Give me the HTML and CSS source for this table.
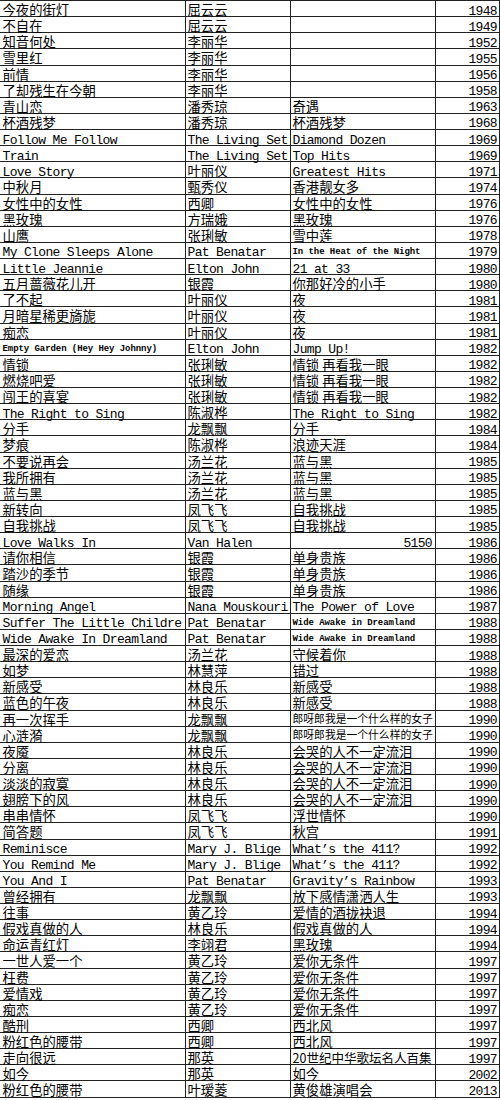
FILE: index.html
```html
<!DOCTYPE html>
<html lang="zh-CN">
<head>
<meta charset="utf-8">
<title>歌曲列表</title>
<link rel="stylesheet" href="styles.css">
</head>
<body>
<div class="sheet">
<div class="row"><span>今夜的街灯</span><span>屈云云</span><span></span><span class="en yr">1948</span></div>
<div class="row"><span>不自在</span><span>屈云云</span><span></span><span class="en yr">1949</span></div>
<div class="row"><span>知音何处</span><span>李丽华</span><span></span><span class="en yr">1952</span></div>
<div class="row"><span>雪里红</span><span>李丽华</span><span></span><span class="en yr">1955</span></div>
<div class="row"><span>前情</span><span>李丽华</span><span></span><span class="en yr">1956</span></div>
<div class="row"><span>了却残生在今朝</span><span>李丽华</span><span></span><span class="en yr">1958</span></div>
<div class="row"><span>青山恋</span><span>潘秀琼</span><span>奇遇</span><span class="en yr">1963</span></div>
<div class="row"><span>杯酒残梦</span><span>潘秀琼</span><span>杯酒残梦</span><span class="en yr">1968</span></div>
<div class="row"><span class="en">Follow Me Follow</span><span class="en">The Living Set</span><span class="en">Diamond Dozen</span><span class="en yr">1969</span></div>
<div class="row"><span class="en">Train</span><span class="en">The Living Set</span><span class="en">Top Hits</span><span class="en yr">1969</span></div>
<div class="row"><span class="en">Love Story</span><span>叶丽仪</span><span class="en">Greatest Hits</span><span class="en yr">1971</span></div>
<div class="row"><span>中秋月</span><span>甄秀仪</span><span>香港靓女多</span><span class="en yr">1974</span></div>
<div class="row"><span>女性中的女性</span><span>西卿</span><span>女性中的女性</span><span class="en yr">1976</span></div>
<div class="row"><span>黑玫瑰</span><span>方瑞娥</span><span>黑玫瑰</span><span class="en yr">1976</span></div>
<div class="row"><span>山鹰</span><span>张琍敏</span><span>雪中莲</span><span class="en yr">1978</span></div>
<div class="row"><span class="en">My Clone Sleeps Alone</span><span class="en">Pat Benatar</span><span class="sm">In the Heat of the Night</span><span class="en yr">1979</span></div>
<div class="row"><span class="en">Little Jeannie</span><span class="en">Elton John</span><span class="en">21 at 33</span><span class="en yr">1980</span></div>
<div class="row"><span>五月蔷薇花儿开</span><span>银霞</span><span>你那好冷的小手</span><span class="en yr">1980</span></div>
<div class="row"><span>了不起</span><span>叶丽仪</span><span>夜</span><span class="en yr">1981</span></div>
<div class="row"><span>月暗星稀更旖旎</span><span>叶丽仪</span><span>夜</span><span class="en yr">1981</span></div>
<div class="row"><span>痴恋</span><span>叶丽仪</span><span>夜</span><span class="en yr">1981</span></div>
<div class="row"><span class="sm">Empty Garden (Hey Hey Johnny)</span><span class="en">Elton John</span><span class="en">Jump Up!</span><span class="en yr">1982</span></div>
<div class="row"><span>情锁</span><span>张琍敏</span><span>情锁 再看我一眼</span><span class="en yr">1982</span></div>
<div class="row"><span>燃烧吧爱</span><span>张琍敏</span><span>情锁 再看我一眼</span><span class="en yr">1982</span></div>
<div class="row"><span>闯王的喜宴</span><span>张琍敏</span><span>情锁 再看我一眼</span><span class="en yr">1982</span></div>
<div class="row"><span class="en">The Right to Sing</span><span>陈淑桦</span><span class="en">The Right to Sing</span><span class="en yr">1982</span></div>
<div class="row"><span>分手</span><span>龙飘飘</span><span>分手</span><span class="en yr">1984</span></div>
<div class="row"><span>梦痕</span><span>陈淑桦</span><span>浪迹天涯</span><span class="en yr">1984</span></div>
<div class="row"><span>不要说再会</span><span>汤兰花</span><span>蓝与黑</span><span class="en yr">1985</span></div>
<div class="row"><span>我所拥有</span><span>汤兰花</span><span>蓝与黑</span><span class="en yr">1985</span></div>
<div class="row"><span>蓝与黑</span><span>汤兰花</span><span>蓝与黑</span><span class="en yr">1985</span></div>
<div class="row"><span>新转向</span><span>凤飞飞</span><span>自我挑战</span><span class="en yr">1985</span></div>
<div class="row"><span>自我挑战</span><span>凤飞飞</span><span>自我挑战</span><span class="en yr">1985</span></div>
<div class="row"><span class="en">Love Walks In</span><span class="en">Van Halen</span><span class="en num">5150</span><span class="en yr">1986</span></div>
<div class="row"><span>请你相信</span><span>银霞</span><span>单身贵族</span><span class="en yr">1986</span></div>
<div class="row"><span>踏沙的季节</span><span>银霞</span><span>单身贵族</span><span class="en yr">1986</span></div>
<div class="row"><span>随缘</span><span>银霞</span><span>单身贵族</span><span class="en yr">1986</span></div>
<div class="row"><span class="en">Morning Angel</span><span class="en">Nana Mouskouri</span><span class="en">The Power of Love</span><span class="en yr">1987</span></div>
<div class="row"><span class="en">Suffer The Little Childre</span><span class="en">Pat Benatar</span><span class="sm">Wide Awake in Dreamland</span><span class="en yr">1988</span></div>
<div class="row"><span class="en">Wide Awake In Dreamland</span><span class="en">Pat Benatar</span><span class="sm">Wide Awake in Dreamland</span><span class="en yr">1988</span></div>
<div class="row"><span>最深的爱恋</span><span>汤兰花</span><span>守候着你</span><span class="en yr">1988</span></div>
<div class="row"><span>如梦</span><span>林慧萍</span><span>错过</span><span class="en yr">1988</span></div>
<div class="row"><span>新感受</span><span>林良乐</span><span>新感受</span><span class="en yr">1988</span></div>
<div class="row"><span>蓝色的午夜</span><span>林良乐</span><span>新感受</span><span class="en yr">1988</span></div>
<div class="row"><span>再一次挥手</span><span>龙飘飘</span><span class="smc">郎呀郎我是一个什么样的女子</span><span class="en yr">1990</span></div>
<div class="row"><span>心涟漪</span><span>龙飘飘</span><span class="smc">郎呀郎我是一个什么样的女子</span><span class="en yr">1990</span></div>
<div class="row"><span>夜魇</span><span>林良乐</span><span>会哭的人不一定流泪</span><span class="en yr">1990</span></div>
<div class="row"><span>分离</span><span>林良乐</span><span>会哭的人不一定流泪</span><span class="en yr">1990</span></div>
<div class="row"><span>淡淡的寂寞</span><span>林良乐</span><span>会哭的人不一定流泪</span><span class="en yr">1990</span></div>
<div class="row"><span>翅膀下的风</span><span>林良乐</span><span>会哭的人不一定流泪</span><span class="en yr">1990</span></div>
<div class="row"><span>串串情怀</span><span>凤飞飞</span><span>浮世情怀</span><span class="en yr">1990</span></div>
<div class="row"><span>简答题</span><span>凤飞飞</span><span>秋宫</span><span class="en yr">1991</span></div>
<div class="row"><span class="en">Reminisce</span><span class="en">Mary J. Blige</span><span class="en">What’s the 411?</span><span class="en yr">1992</span></div>
<div class="row"><span class="en">You Remind Me</span><span class="en">Mary J. Blige</span><span class="en">What’s the 411?</span><span class="en yr">1992</span></div>
<div class="row"><span class="en">You And I</span><span class="en">Pat Benatar</span><span class="en">Gravity’s Rainbow</span><span class="en yr">1993</span></div>
<div class="row"><span>曾经拥有</span><span>龙飘飘</span><span>放下感情潇洒人生</span><span class="en yr">1993</span></div>
<div class="row"><span>往事</span><span>黄乙玲</span><span>爱情的酒拢袂退</span><span class="en yr">1994</span></div>
<div class="row"><span>假戏真做的人</span><span>林良乐</span><span>假戏真做的人</span><span class="en yr">1994</span></div>
<div class="row"><span>命运青红灯</span><span>李翊君</span><span>黑玫瑰</span><span class="en yr">1994</span></div>
<div class="row"><span>一世人爱一个</span><span>黄乙玲</span><span>爱你无条件</span><span class="en yr">1997</span></div>
<div class="row"><span>枉费</span><span>黄乙玲</span><span>爱你无条件</span><span class="en yr">1997</span></div>
<div class="row"><span>爱情戏</span><span>黄乙玲</span><span>爱你无条件</span><span class="en yr">1997</span></div>
<div class="row"><span>痴恋</span><span>黄乙玲</span><span>爱你无条件</span><span class="en yr">1997</span></div>
<div class="row"><span>酷刑</span><span>西卿</span><span>西北风</span><span class="en yr">1997</span></div>
<div class="row"><span>粉红色的腰带</span><span>西卿</span><span>西北风</span><span class="en yr">1997</span></div>
<div class="row"><span>走向很远</span><span>那英</span><span class="mid">20世纪中华歌坛名人百集</span><span class="en yr">1997</span></div>
<div class="row"><span>如今</span><span>那英</span><span>如今</span><span class="en yr">2002</span></div>
<div class="row"><span>粉红色的腰带</span><span>叶瑷菱</span><span>黄俊雄演唱会</span><span class="en yr">2013</span></div>
</div>
</body>
</html>
```

FILE: styles.css
```css
html, body {
  margin: 0;
  padding: 0;
  background: #ffffff;
}

.sheet {
  width: 500px;
  border-top: 1px solid #222222;
  color: #000000;
}

.row {
  display: grid;
  grid-template-columns: 186px 105px 145px 64px;
  height: 16.14px;
  box-sizing: border-box;
  border-bottom: 1px solid #222222;
}

.row > span {
  display: block;
  box-sizing: border-box;
  border-right: 1px solid #222222;
  white-space: nowrap;
  padding-left: 1.5px;
  padding-top: 2px;
  font-family: "Noto Sans CJK SC", "Noto Sans", sans-serif;
  font-size: 13.33px;
  line-height: 13px;
}

.row > span:first-child {
  padding-left: 2.5px;
}

.row > span.en {
  font-family: "Liberation Mono", "Noto Sans CJK SC", monospace;
  font-size: 13px;
  letter-spacing: -0.65px;
  line-height: 10px;
  padding-top: 5.5px;
}

.row > span.yr {
  text-align: right;
  padding-right: 2px;
}

.row > span.num {
  text-align: right;
  padding-right: 3px;
}

.row > span.sm {
  font-family: "Liberation Mono", monospace;
  font-size: 9px;
  font-weight: bold;
  letter-spacing: -0.07px;
  line-height: 9px;
  padding-top: 4.9px;
}

.row > span.smc {
  font-size: 10.8px;
  line-height: 11px;
  padding-top: 2.7px;
}

.row > span.mid {
  font-size: 12.5px;
  line-height: 12px;
  padding-top: 2.5px;
}
```
